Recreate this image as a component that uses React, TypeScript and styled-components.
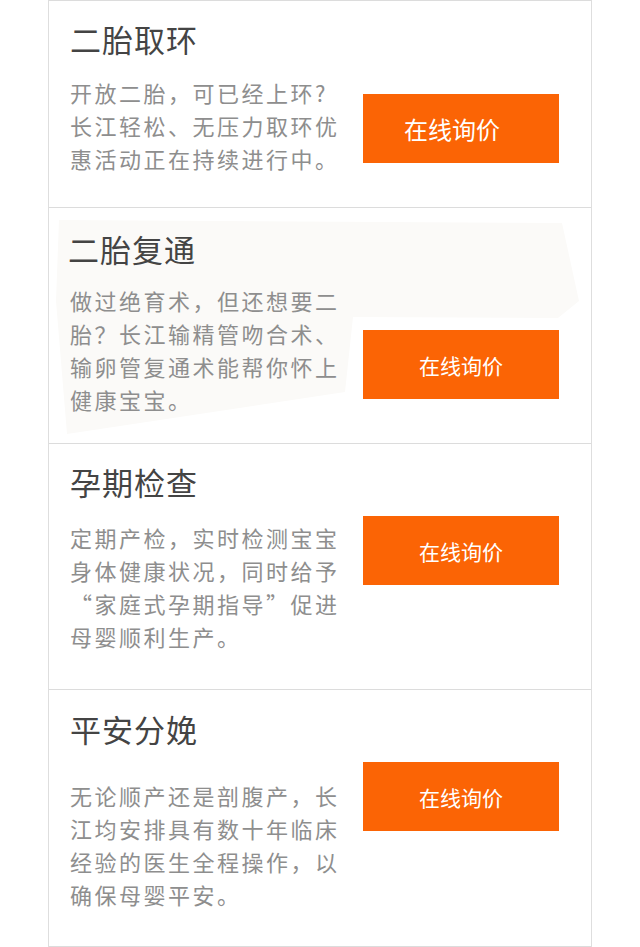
import styled, { createGlobalStyle } from "styled-components";

const GlobalStyle = createGlobalStyle`
  html, body {
    margin: 0;
    padding: 0;
    background: #ffffff;
  }
  body {
    font-family: "Noto Sans CJK SC", "Noto Sans", sans-serif;
  }
`;

interface ServiceItem {
  title: string;
  desc: string;
  height: number;
  padTop: number;
  descGap: number;
  btnTop: number;
  big?: boolean;
  paper?: boolean;
}

// \u200B lets the line break before the opening quote
const services: ServiceItem[] = [
  {
    title: "二胎取环",
    desc: "开放二胎，可已经上环?长江轻松、无压力取环优惠活动正在持续进行中。",
    height: 207,
    padTop: 17,
    descGap: 17,
    btnTop: 75,
    big: true,
  },
  {
    title: "二胎复通",
    desc: "做过绝育术，但还想要二胎？长江输精管吻合术、输卵管复通术能帮你怀上健康宝宝。",
    height: 236,
    padTop: 20,
    descGap: 15,
    btnTop: 101,
    paper: true,
  },
  {
    title: "孕期检查",
    desc: "定期产检，实时检测宝宝身体健康状况，同时给予\u200B“家庭式孕期指导”促进母婴顺利生产。",
    height: 246,
    padTop: 17,
    descGap: 19,
    btnTop: 54,
  },
  {
    title: "平安分娩",
    desc: "无论顺产还是剖腹产，长江均安排具有数十年临床经验的医生全程操作，以确保母婴平安。",
    height: 258,
    padTop: 18,
    descGap: 30,
    btnTop: 53,
  },
];

export default function App() {
  return (
    <>
      <GlobalStyle />
      <List>
        {services.map((s) => (
          <Card key={s.title} $height={s.height} $padTop={s.padTop}>
            {s.paper && (
              <Paper viewBox="0 0 542 236" preserveAspectRatio="none">
                <polygon points="10,12 513,15 530,93 509,110 304,109 296,184 18,226 7,93" fill="#fbfaf8" />
              </Paper>
            )}
            <TextCol>
              <Title $shift={s.paper ? -2 : 0}>{s.title}</Title>
              <Desc $gap={s.descGap}>{s.desc}</Desc>
            </TextCol>
            <AskButton $top={s.btnTop} $big={s.big}>
              在线询价
            </AskButton>
          </Card>
        ))}
      </List>
    </>
  );
}

const List = styled.div`
  width: 542px;
  margin-left: 48px;
  border-left: 1px solid #dedede;
  border-right: 1px solid #dedede;
`;

const Card = styled.section<{ $height: number; $padTop: number }>`
  position: relative;
  box-sizing: border-box;
  height: ${(p) => p.$height}px;
  display: flex;
  align-items: flex-start;
  padding: ${(p) => p.$padTop + 1}px 32px 0 21px;
  border-top: 1px solid #dcdcdc;

  &:last-child {
    border-bottom: 1px solid #dcdcdc;
  }
`;

const Paper = styled.svg`
  position: absolute;
  left: 0;
  top: 0;
  width: 542px;
  height: 236px;
  z-index: 0;
`;

const TextCol = styled.div`
  position: relative;
  z-index: 1;
  width: 293px;
  flex: none;
`;

const Title = styled.h2<{ $shift: number }>`
  margin: 0 0 0 ${(p) => p.$shift}px;
  font-size: 31px;
  line-height: 40px;
  font-weight: 400;
  letter-spacing: 1px;
  color: #444444;
`;

const Desc = styled.p<{ $gap: number }>`
  margin: ${(p) => p.$gap}px 0 0;
  width: 280px;
  font-size: 22px;
  line-height: 33px;
  letter-spacing: 2.5px;
  color: #8e8e8e;
`;

const AskButton = styled.button<{ $top: number; $big?: boolean }>`
  position: relative;
  z-index: 1;
  flex: none;
  width: 196px;
  height: 69px;
  margin-top: ${(p) => p.$top}px;
  padding: 0 ${(p) => (p.$big ? 18 : 0)}px 0 0;
  border: none;
  border-radius: 0;
  background: #fb6405;
  color: #ffffff;
  font-family: "Noto Sans CJK SC", sans-serif;
  font-size: ${(p) => (p.$big ? 24 : 21)}px;
  cursor: pointer;
`;
